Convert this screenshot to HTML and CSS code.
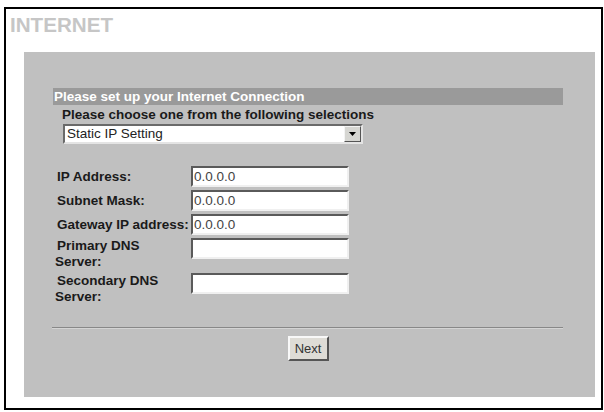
FILE: index.html
```html
<!DOCTYPE html>
<html lang="en">

<head>
    <meta charset="UTF-8">
    <meta name="viewport" content="width=device-width, initial-scale=1.0">
    <title>Internet - Setup Wizard</title>
    <link rel="stylesheet" href="styles.css">
</head>

<body>

    <div class="frame">
        <!-- Page Title -->
        <h1 class="title">INTERNET</h1>

        <!-- Wizard Panel -->
        <div class="panel">
            <div class="section-head">Please set up your Internet Connection</div>
            <div class="prompt">Please choose one from the following selections</div>

            <div class="select">
                <span class="select-text">Static IP Setting</span>
                <span class="select-arrow">
                    <svg width="7" height="4" viewBox="0 0 7 4"><path d="M0 0h7L3.5 4z" fill="#000"/></svg>
                </span>
            </div>

            <!-- Static IP Fields -->
            <div class="fields">
                <label class="field-label">IP Address:</label>
                <input class="field-input" type="text" value="0.0.0.0">

                <label class="field-label">Subnet Mask:</label>
                <input class="field-input" type="text" value="0.0.0.0">

                <label class="field-label">Gateway IP address:</label>
                <input class="field-input" type="text" value="0.0.0.0">

                <label class="field-label narrow">Primary DNS Server:</label>
                <input class="field-input" type="text" value="">

                <label class="field-label narrow">Secondary DNS Server:</label>
                <input class="field-input" type="text" value="">
            </div>

            <hr class="divider">

            <div class="actions">
                <button class="next-btn">Next</button>
            </div>
        </div>
    </div>

</body>

</html>
```

FILE: styles.css
```css
body {
    font-family: "Liberation Sans", Arial, sans-serif;
    background: #fff;
    margin: 0;
}

/* Outer Frame */
.frame {
    margin: 7px 1px 0 4px;
    height: 403px;
    box-sizing: border-box;
    border: 2px solid #000;
    background: #fff;
}

.title {
    margin: 4px 0 0 4px;
    font-size: 20.6px;
    line-height: 24px;
    font-weight: bold;
    color: #c6c6c6;
}

/* Gray Panel */
.panel {
    margin: 15px 6px 0 18px;
    height: 345px;
    box-sizing: border-box;
    padding: 36px 32px 0 29px;
    background: #c0c0c0;
    font-size: 13.5px;
    color: #1a1a1a;
}

.section-head {
    height: 17px;
    line-height: 17px;
    padding-left: 1px;
    background: #9a9a9a;
    color: #fff;
    font-weight: bold;
}

.prompt {
    margin-top: 2px;
    padding-left: 9px;
    line-height: 16px;
    font-weight: bold;
}

/* Drop-down */
.select {
    display: flex;
    width: 300px;
    height: 20px;
    margin: 1px 0 0 10px;
    box-sizing: border-box;
    border-top: 2px solid #6a6a6a;
    border-left: 2px solid #6a6a6a;
    border-bottom: 2px solid #e4e4e4;
    border-right: 2px solid #e4e4e4;
    background: #fff;
}

.select-text {
    flex: 1;
    padding-left: 2px;
    line-height: 16px;
    color: #222;
}

.select-arrow {
    width: 17px;
    display: flex;
    align-items: center;
    justify-content: center;
    box-sizing: border-box;
    background: #d6d6d2;
    border-top: 1px solid #f4f4f4;
    border-left: 1px solid #f4f4f4;
    border-bottom: 1px solid #555;
    border-right: 1px solid #555;
}

/* Form Fields */
.fields {
    display: grid;
    grid-template-columns: 136px 158px;
    row-gap: 3px;
    margin: 22px 0 0 2px;
}

.field-label {
    align-self: center;
    text-indent: 2px;
    line-height: 16px;
    font-weight: bold;
    white-space: nowrap;
}

.field-label.narrow {
    white-space: normal;
    width: 120px;
}

.field-input {
    align-self: start;
    width: 158px;
    height: 21px;
    box-sizing: border-box;
    margin: 0;
    padding: 0 0 0 1px;
    border-top: 2px solid #5a5a5a;
    border-left: 2px solid #5a5a5a;
    border-bottom: 2px solid #f0f0f0;
    border-right: 2px solid #f0f0f0;
    background: #fff;
    font-family: inherit;
    font-size: 13.5px;
    color: #444;
}

.divider {
    margin: 22px 0 0 -1px;
    border: none;
    border-top: 1px solid #888;
    border-bottom: 1px solid #d4d4d4;
}

.actions {
    display: flex;
    justify-content: center;
    margin-top: 7px;
}

.next-btn {
    width: 41px;
    height: 25px;
    padding: 0;
    font-family: inherit;
    font-size: 13px;
    color: #333;
    background: #dedcd6;
    border-top: 2px solid #f8f8f8;
    border-left: 2px solid #f8f8f8;
    border-bottom: 2px solid #555;
    border-right: 2px solid #555;
}
```
